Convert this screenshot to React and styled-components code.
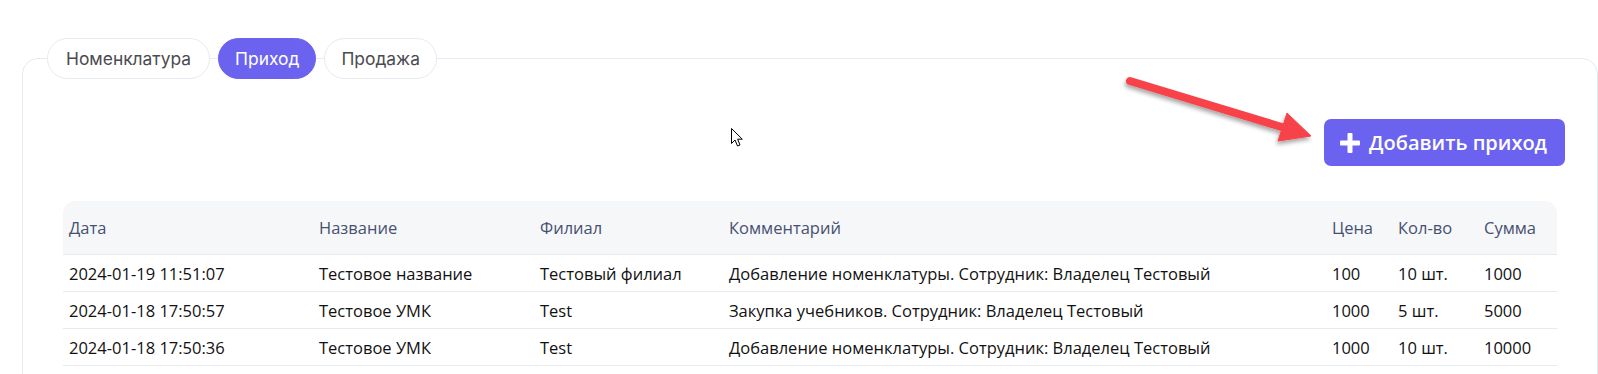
import React from 'react';
import styled, { createGlobalStyle } from 'styled-components';

const GlobalStyle = createGlobalStyle`
  html, body {
    margin: 0;
    padding: 0;
    background: #ffffff;
  }
`;

const Page = styled.div`
  position: relative;
  padding: 38px 0 40px 22px;
  font-family: 'Open Sans', 'Noto Sans', sans-serif;
  color: #111827;
`;

const TabsRow = styled.nav`
  position: relative;
  z-index: 1;
  display: flex;
  gap: 8px;
  margin: 0 0 -21px 25px;
`;

const Tab = styled.button`
  height: 41px;
  padding: 0 ${(p) => (p.$tight ? 16 : 18)}px;
  border-radius: 21px;
  border: 1px solid ${(p) => (p.$active ? '#6b63f0' : '#e6ebf2')};
  background: ${(p) => (p.$active ? '#6b63f0' : '#ffffff')};
  color: ${(p) => (p.$active ? '#ffffff' : '#4b4b4f')};
  font-family: Inter, 'Noto Sans', sans-serif;
  font-size: 17.4px;
  cursor: pointer;
`;

const Panel = styled.section`
  border: 1px solid #e6ebf2;
  border-radius: 16px;
  padding: 60px 40px 40px 40px;
  min-height: 300px;
`;

const Toolbar = styled.div`
  display: flex;
  justify-content: flex-end;
  margin-right: -8px;
  margin-bottom: 35px;
`;

const AddButton = styled.button`
  display: flex;
  align-items: center;
  gap: 9px;
  height: 47px;
  padding: 0 18px 0 16px;
  border: none;
  border-radius: 7px;
  background: #6b63f0;
  color: #ffffff;
  font-family: 'Open Sans', 'Noto Sans', sans-serif;
  font-size: 20px;
  font-weight: 600;
  cursor: pointer;
`;

const Table = styled.table`
  width: 100%;
  border-collapse: collapse;
  table-layout: fixed;
  font-size: 16.5px;
`;

const HeadCell = styled.th`
  height: 53px;
  padding: 0 6px;
  text-align: left;
  font-weight: 400;
  color: #465170;
  background: #f6f7f9;
  border-bottom: 1px solid #e6ebf2;

  &:first-child {
    border-top-left-radius: 12px;
  }
  &:last-child {
    border-top-right-radius: 12px;
  }
`;

const Cell = styled.td`
  height: 36px;
  padding: 0 6px;
  color: #111111;
  white-space: nowrap;
  border-bottom: 1px solid #e6ebf2;
`;

const Overlay = styled.svg`
  position: absolute;
  pointer-events: none;
  overflow: visible;
`;

const columns = [
  { title: 'Дата', width: 250 },
  { title: 'Название', width: 221 },
  { title: 'Филиал', width: 189 },
  { title: 'Комментарий', width: 603 },
  { title: 'Цена', width: 66 },
  { title: 'Кол-во', width: 86 },
  { title: 'Сумма', width: 79 },
];

const rows = [
  ['2024-01-19 11:51:07', 'Тестовое название', 'Тестовый филиал', 'Добавление номенклатуры. Сотрудник: Владелец Тестовый', '100', '10 шт.', '1000'],
  ['2024-01-18 17:50:57', 'Тестовое УМК', 'Test', 'Закупка учебников. Сотрудник: Владелец Тестовый', '1000', '5 шт.', '5000'],
  ['2024-01-18 17:50:36', 'Тестовое УМК', 'Test', 'Добавление номенклатуры. Сотрудник: Владелец Тестовый', '1000', '10 шт.', '10000'],
];

const tabs = ['Номенклатура', 'Приход', 'Продажа'];

function PlusIcon() {
  return (
    <svg width="20" height="20" viewBox="0 0 20 20">
      <rect x="0" y="7.5" width="20" height="5" rx="1" fill="#fff" />
      <rect x="7.5" y="0" width="5" height="20" rx="1" fill="#fff" />
    </svg>
  );
}

function Arrow() {
  return (
    <Overlay style={{ left: 1115, top: 70 }} width="210" height="80" viewBox="0 0 210 80">
      <defs>
        <filter id="arrowShadow" x="-20%" y="-50%" width="140%" height="200%">
          <feDropShadow dx="-1" dy="3" stdDeviation="2" floodColor="#000" floodOpacity="0.35" />
        </filter>
      </defs>
      <g filter="url(#arrowShadow)" fill="#f8434a" stroke="#f8434a">
        <line x1="15" y1="11" x2="170" y2="58" strokeWidth="8" strokeLinecap="round" />
        <polygon points="196,66 172,43 163,71" strokeWidth="1" strokeLinejoin="round" />
      </g>
    </Overlay>
  );
}

function Cursor() {
  return (
    <Overlay style={{ left: 731, top: 128 }} width="13" height="20" viewBox="0 0 13 20">
      <path
        d="M0.5 0.5 L0.5 15.5 L4 12 L6.5 18 L9 17 L6.6 11.2 L11.3 11.2 Z"
        fill="#fff"
        stroke="#000"
        strokeWidth="1"
        strokeLinejoin="miter"
      />
    </Overlay>
  );
}

export default function App() {
  return (
    <Page>
      <GlobalStyle />
      <TabsRow>
        {tabs.map((t, i) => (
          <Tab key={t} $active={t === 'Приход'} $tight={i > 0}>
            {t}
          </Tab>
        ))}
      </TabsRow>
      <Panel>
        <Toolbar>
          <AddButton>
            <PlusIcon />
            Добавить приход
          </AddButton>
        </Toolbar>
        <Table>
          <colgroup>
            {columns.map((c) => (
              <col key={c.title} style={{ width: c.width }} />
            ))}
          </colgroup>
          <thead>
            <tr>
              {columns.map((c) => (
                <HeadCell key={c.title}>{c.title}</HeadCell>
              ))}
            </tr>
          </thead>
          <tbody>
            {rows.map((r, i) => (
              <tr key={i}>
                {r.map((v, j) => (
                  <Cell key={j}>{v}</Cell>
                ))}
              </tr>
            ))}
          </tbody>
        </Table>
      </Panel>
      <Arrow />
      <Cursor />
    </Page>
  );
}
